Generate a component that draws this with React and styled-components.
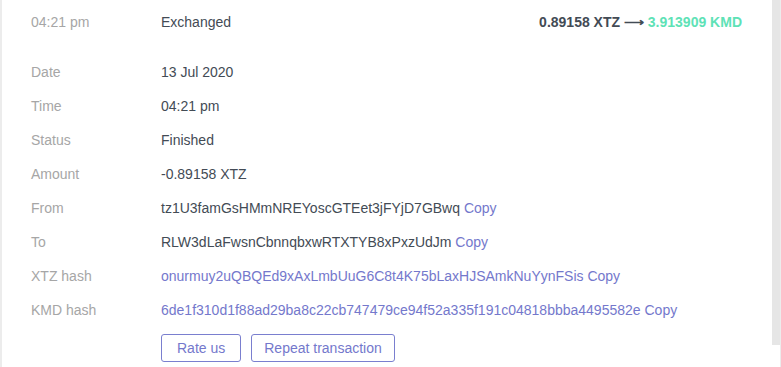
import React from "react";
import styled, { createGlobalStyle } from "styled-components";

const Global = createGlobalStyle`
  html, body { margin: 0; padding: 0; background: #fff; }
  body { font-family: "Liberation Sans", Arial, sans-serif; font-size: 14px; }
`;

const Frame = styled.div`
  display: flex;
  width: 781px;
  height: 367px;
  box-sizing: border-box;
  border-left: 2px solid #ececec;
  border-right: 1px solid #ececec;
  overflow: hidden;
`;

const Content = styled.div`
  flex: 1;
  display: flex;
  flex-direction: column;
  padding: 5px 30px 0 29px;
`;

const Track = styled.div`
  width: 8px;
  display: flex;
  flex-direction: column;
`;

const Thumb = styled.div`
  height: 345px;
  background: #e6e6e6;
`;

const Header = styled.div`
  display: grid;
  grid-template-columns: 130px 1fr auto;
  align-items: center;
  height: 34px;
  margin-bottom: 16px;
`;

const Row = styled.div`
  display: grid;
  grid-template-columns: 130px 1fr;
  align-items: center;
  height: 34px;
`;

const Label = styled.span`
  color: #a6a6a6;
`;

const Value = styled.span`
  color: ${(p) => (p.$link ? "#7478cc" : "#434b55")};
  white-space: nowrap;
`;

const Copy = styled.span`
  color: #7478cc;
  cursor: pointer;
`;

const Summary = styled.span`
  font-weight: bold;
  color: #434b55;
  white-space: nowrap;
`;

const Green = styled.span`
  color: #5ee2b6;
`;

const Actions = styled.div`
  display: flex;
  gap: 10px;
  margin-top: 7px;
  padding-left: 130px;
`;

const Button = styled.button`
  height: 28px;
  box-sizing: border-box;
  padding: 0 ${(p) => p.$pad || 14}px;
  border: 1px solid #7a7fcf;
  border-radius: 3px;
  background: #fff;
  color: #7478cc;
  font-family: "Liberation Sans", Arial, sans-serif;
  font-size: 14px;
  cursor: pointer;
`;

const rows = [
  { label: "Date", value: "13 Jul 2020" },
  { label: "Time", value: "04:21 pm" },
  { label: "Status", value: "Finished" },
  { label: "Amount", value: "-0.89158 XTZ" },
  { label: "From", value: "tz1U3famGsHMmNREYoscGTEet3jFYjD7GBwq", copy: true },
  { label: "To", value: "RLW3dLaFwsnCbnnqbxwRTXTYB8xPxzUdJm", copy: true },
  { label: "XTZ hash", value: "onurmuy2uQBQEd9xAxLmbUuG6C8t4K75bLaxHJSAmkNuYynFSis", copy: true, link: true },
  { label: "KMD hash", value: "6de1f310d1f88ad29ba8c22cb747479ce94f52a335f191c04818bbba4495582e", copy: true, link: true },
];

export default function App() {
  return (
    <>
      <Global />
      <Frame>
        <Content>
          <Header>
            <Label>04:21 pm</Label>
            <Value>Exchanged</Value>
            <Summary>
              0.89158 XTZ ⟶ <Green>3.913909 KMD</Green>
            </Summary>
          </Header>
          {rows.map((r) => (
            <Row key={r.label}>
              <Label>{r.label}</Label>
              <Value $link={r.link}>
                {r.value}
                {r.copy && <Copy> Copy</Copy>}
              </Value>
            </Row>
          ))}
          <Actions>
            <Button $pad={15}>Rate us</Button>
            <Button $pad={12}>Repeat transaction</Button>
          </Actions>
        </Content>
        <Track>
          <Thumb />
        </Track>
      </Frame>
    </>
  );
}
